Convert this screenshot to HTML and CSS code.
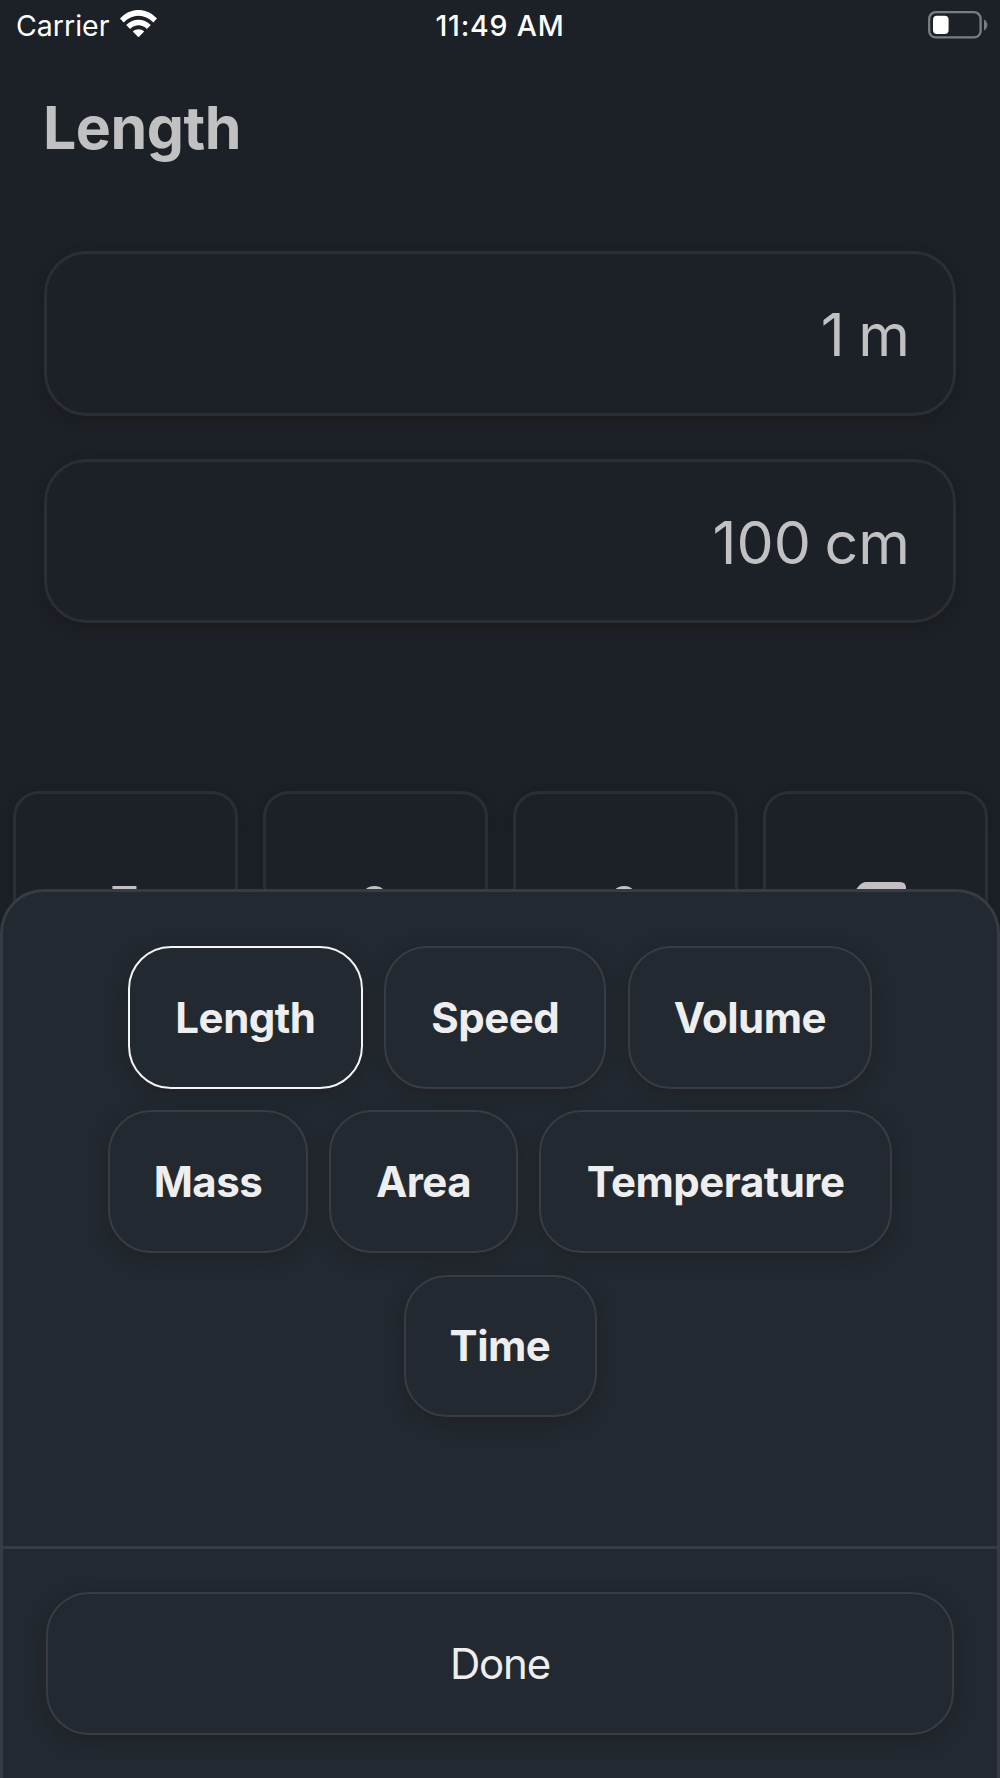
FILE: index.html
```html
<!DOCTYPE html>
<html lang="en">
<head>
    <meta charset="UTF-8">
    <meta name="viewport" content="width=device-width, initial-scale=1.0">
    <title>Unit Converter</title>
    <link rel="stylesheet" href="styles.css">
</head>
<body>
    <div class="app">
        <header class="status">
            <div class="carrier">
                <span>Carrier</span>
                <svg class="wifi" viewBox="0 0 37 27">
                    <path d="M0 8.6C10.4-2.9 26.600-2.900 37 8.600L33.300 12.400C24.800 3.400 12.200 3.400 3.700 12.400Z"/>
                    <path d="M6.200 15.100C13.200 7.800 23.800 7.800 30.800 15.100L26.900 19C22 14 15 14 10.100 19Z"/>
                    <path d="M12.800 21.600C16 18.400 21 18.400 24.200 21.600L18.500 27.300Z"/>
                </svg>
            </div>
            <span class="time">11:49 AM</span>
            <svg class="battery" viewBox="0 0 60 28">
                <rect x="1.200" y="1.200" width="51.400" height="25.200" rx="6.500" fill="none" stroke="#7b7d81" stroke-width="2.300"/>
                <rect x="5" y="4.700" width="15.600" height="18.300" rx="4" fill="#fff"/>
                <path d="M56 8.500C60.500 11 60.500 17 56 19.500Z" fill="#7b7d81"/>
            </svg>
        </header>

        <h1>Length</h1>

        <div class="displays">
            <div class="display">1 m</div>
            <div class="display">100 cm</div>
        </div>

        <div class="keypad">
            <button class="key">7</button>
            <button class="key">8</button>
            <button class="key">9</button>
            <button class="key">
                <svg class="backspace" viewBox="0 0 62 45">
                    <path d="M22 0H56Q62 0 62 6V38Q62 44 56 44H22Q19 44 17 42L0 22.500L14 5Q18 0 22 0Z"/>
                </svg>
            </button>
        </div>

        <!-- unit type picker -->
        <div class="sheet">
            <div class="types">
                <button class="type length active">Length</button>
                <button class="type speed">Speed</button>
                <button class="type volume">Volume</button>
                <button class="type mass">Mass</button>
                <button class="type area">Area</button>
                <button class="type temperature">Temperature</button>
                <button class="type duration">Time</button>
            </div>
            <div class="footer">
                <button class="done">Done</button>
            </div>
        </div>
    </div>
</body>
</html>
```
FILE: styles.css
```css
*{
    box-sizing: border-box;
}
body{
    margin: 0;
    background: #1c2027;
    font-family: Inter, "Liberation Sans", sans-serif;
}
button{
    font-family: inherit;
    padding: 0;
    background: none;
}
.app{
    position: relative;
    height: 1778px;
    overflow: hidden;
}
.status{
    display: grid;
    grid-template-columns: 1fr auto 1fr;
    align-items: center;
    height: 50px;
    padding: 0 12px 0 16px;
    color: white;
    font-size: 28.5px;
}
.carrier{
    display: flex;
    align-items: center;
    gap: 11px;
}
.wifi{
    width: 37px;
    height: 27px;
    margin-top: -3px;
    fill: white;
}
.time{
    font-weight: 500;
    letter-spacing: 0.8px;
    margin-left: -4px;
}
.battery{
    width: 60px;
    height: 28px;
    margin-top: -1px;
    justify-self: end;
}
h1{
    margin: 42px 0 0 43px;
    font-size: 59px;
    line-height: 72px;
    letter-spacing: -0.5px;
    color: #c1c1c1;
}
.displays{
    display: flex;
    flex-direction: column;
    gap: 43px;
    margin: 87px 44px 0;
}
.display{
    height: 164.500px;
    padding-right: 43px;
    border: 3px solid #2b2e34;
    border-radius: 43px;
    box-shadow: 0 4px 12px rgba(27, 25, 24, 0.6);
    background: #1c2027;
    color: #c1c1c1;
    font-size: 59px;
    line-height: 161px;
    word-spacing: -3px;
    text-align: right;
}
.keypad{
    display: grid;
    grid-template-columns: repeat(4, 1fr);
    gap: 25px;
    margin: 168px 12px 0 13px;
}
.key{
    display: flex;
    align-items: center;
    justify-content: center;
    height: 227px;
    padding-right: 2px;
    border: 3px solid #2b2e34;
    border-radius: 26px;
    box-shadow: 0 4px 12px rgba(27, 25, 24, 0.6);
    background: #1c2027;
    color: #c1c1c1;
    font-size: 51px;
}
.backspace{
    width: 62px;
    height: 45px;
    fill: #c4bfc3;
}
.sheet{
    position: absolute;
    left: 0;
    right: 0;
    bottom: 0;
    height: 889px;
    border: 3px solid #373b43;
    border-bottom: none;
    border-radius: 44px 44px 0 0;
    background: #222930;
    color: #eee;
}
.types{
    display: flex;
    flex-wrap: wrap;
    justify-content: center;
    align-content: flex-start;
    gap: 21.600px;
    height: 654px;
    padding: 54px 80px 0;
}
.type{
    height: 142.700px;
    border: 2px solid #393c44;
    border-radius: 43px;
    box-shadow: 0 5px 16px rgba(33, 29, 38, 0.75);
    background: #222930;
    color: #eee;
    font-size: 42px;
    font-weight: 700;
    letter-spacing: -0.5px;
}
.active{
    border-color: #f4f4f4;
}
.length{
    width: 234.500px;
}
.speed{
    width: 222px;
}
.volume{
    width: 244px;
}
.mass{
    width: 199.500px;
}
.area{
    width: 188.500px;
}
.temperature{
    width: 352.500px;
}
.duration{
    width: 193px;
}
.footer{
    border-top: 3px solid #373b43;
    padding: 43px;
}
.done{
    width: 100%;
    height: 142.700px;
    border: 2px solid #393c44;
    border-radius: 43px;
    box-shadow: 0 5px 16px rgba(33, 29, 38, 0.75);
    background: #222930;
    color: #eee;
    font-size: 42px;
    letter-spacing: -1.200px;
}
```
